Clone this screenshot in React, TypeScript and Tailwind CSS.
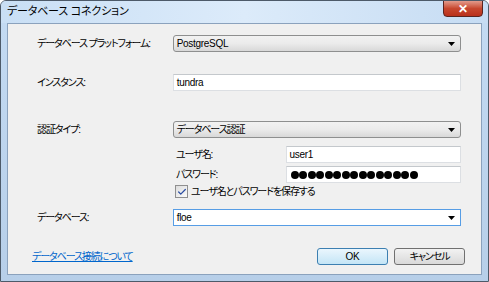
import { Check } from 'lucide-react';

const FONT = "font-['Liberation_Sans','Noto_Sans_CJK_JP',sans-serif] [font-feature-settings:'palt']";
const JP = 'tracking-[-1.1px]';

function ComboBox({ value, width, jp }: { value: string; width: string; jp?: boolean }) {
  return (
    <div className={`${width} h-[17px] flex items-center justify-between rounded-[3px] border border-[#8e8f8f] bg-gradient-to-b from-[#f2f2f2] via-[#ebebeb] to-[#d8d8d8] pl-[3px] pr-[5px]`}>
      <span className={`leading-none text-black ${jp ? JP : ''}`}>{value}</span>
      <Arrow />
    </div>
  );
}

function Arrow() {
  return (
    <svg width="7" height="4" viewBox="0 0 7 4">
      <path d="M0 0h7L3.5 4z" fill="#000" />
    </svg>
  );
}

function TextBox({ children, width }: { children: React.ReactNode; width: string }) {
  return (
    <div className={`${width} h-[17px] flex items-center border border-[#dcdfe3] border-t-[#c4c8cc] bg-white pl-[3px]`}>
      {children}
    </div>
  );
}

export default function App() {
  return (
    <div className={`${FONT} w-[489px] h-[282px] flex flex-col overflow-hidden rounded-t-[6px] border border-[#4d5a69] bg-gradient-to-b from-[#c4dbf3] to-[#b7cfe9] whitespace-nowrap`}>
      {/* Title bar */}
      <div className="h-[22px] flex items-start justify-between bg-gradient-to-r from-[#c9dff5] via-[#dcebfa] to-[#c6dcf3] pl-[6px] pr-[5px]">
        <span className="mt-[5px] text-[11px] leading-none tracking-[-0.2px] text-black">データベース コネクション</span>
        <div className="w-[40px] h-[17px] -mt-px flex items-center justify-center rounded-b-[4px] border border-[#5a2420] bg-gradient-to-b from-[#e29a8b] via-[#c7472e] to-[#b9301c]">
          <span className="text-[12px] font-bold leading-none text-white">✕</span>
        </div>
      </div>

      {/* Client area */}
      <div className="flex-1 mx-[6px] mb-[6px] flex flex-col border border-[#8ba2bd] bg-[#f0f0f0] pl-[29px] pr-[20px] pt-[11px] text-[10px] tracking-[-0.3px] text-black">
        <div className="flex items-center h-[17px]">
          <span className={`w-[136px] ${JP}`}>データベース プラットフォーム:</span>
          <ComboBox value="PostgreSQL" width="w-[289px]" />
        </div>

        <div className="flex items-center h-[17px] mt-[22px]">
          <span className={`w-[136px] ${JP}`}>インスタンス:</span>
          <TextBox width="w-[289px]">
            <span className="leading-none">tundra</span>
          </TextBox>
        </div>

        <div className="flex items-center h-[17px] mt-[30px]">
          <span className={`w-[136px] ${JP}`}>認証タイプ:</span>
          <ComboBox value="データベース認証" width="w-[289px]" jp />
        </div>

        <div className="flex items-center h-[17px] mt-[8px] pl-[139px]">
          <span className={`w-[110px] ${JP}`}>ユーザ名:</span>
          <TextBox width="w-[176px]">
            <span className="leading-none">user1</span>
          </TextBox>
        </div>

        <div className="flex items-center h-[17px] mt-[3px] pl-[139px]">
          <span className={`w-[110px] ${JP}`}>パスワード:</span>
          <TextBox width="w-[176px]">
            <div className="flex gap-[0.5px] pl-[1px]">
              {Array.from({ length: 15 }).map((_, i) => (
                <span key={i} className="w-[8px] h-[8px] rounded-full bg-black" />
              ))}
            </div>
          </TextBox>
        </div>

        <div className="flex items-center h-[13px] mt-[2px] pl-[138px]">
          <div className="w-[13px] h-[13px] flex items-center justify-center border border-[#8f8f8f] bg-gradient-to-br from-[#dcdcdc] to-[#fbfbfb]">
            <Check size={10} strokeWidth={3} className="text-[#2d4fa3]" />
          </div>
          <span className={`ml-[3px] ${JP}`}>ユーザ名とパスワードを保存する</span>
        </div>

        <div className="flex items-center h-[17px] mt-[11px]">
          <span className={`w-[136px] ${JP}`}>データベース:</span>
          <div className="w-[289px] h-[17px] flex items-center justify-between border border-[#569de5] bg-white pl-[3px] pr-[5px]">
            <span className="leading-none">floe</span>
            <Arrow />
          </div>
        </div>

        <div className="flex items-center justify-between mt-[22px] -ml-[5px] -mr-[4px]">
          <a className={`text-[#0066cc] underline ${JP}`}>データベース接続について</a>
          <div className="flex gap-[6px]">
            <button className="w-[71px] h-[17px] rounded-[3px] border border-[#3c7fb1] bg-gradient-to-b from-[#eaf6fd] to-[#c4e5f6] leading-none">OK</button>
            <button className={`w-[71px] h-[17px] rounded-[3px] border border-[#707070] bg-gradient-to-b from-[#f2f2f2] to-[#d9d9d9] leading-none ${JP}`}>キャンセル</button>
          </div>
        </div>
      </div>
    </div>
  );
}
